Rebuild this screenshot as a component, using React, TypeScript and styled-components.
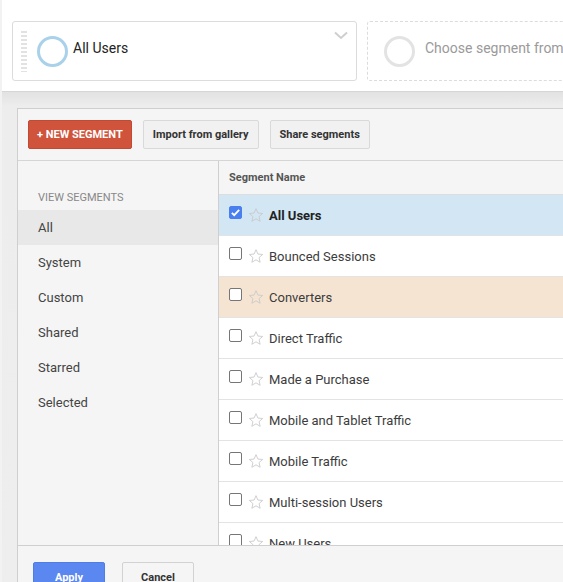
import React from 'react';
import styled, { createGlobalStyle } from 'styled-components';

const GlobalStyle = createGlobalStyle`
  html, body {
    margin: 0;
    padding: 0;
    background: #fff;
  }
  body {
    font-family: Roboto, "Liberation Sans", Arial, sans-serif;
  }
`;

const views = ['All', 'System', 'Custom', 'Shared', 'Starred', 'Selected'];

const segments = [
  { name: 'All Users', checked: true, tone: 'blue' },
  { name: 'Bounced Sessions', checked: false, tone: 'none' },
  { name: 'Converters', checked: false, tone: 'peach' },
  { name: 'Direct Traffic', checked: false, tone: 'none' },
  { name: 'Made a Purchase', checked: false, tone: 'none' },
  { name: 'Mobile and Tablet Traffic', checked: false, tone: 'none' },
  { name: 'Mobile Traffic', checked: false, tone: 'none' },
  { name: 'Multi-session Users', checked: false, tone: 'none' },
  { name: 'New Users', checked: false, tone: 'none' },
  { name: 'Non-bounce Sessions', checked: false, tone: 'none' },
];

const ROW_BG: Record<string, string> = {
  blue: '#d2e6f3',
  peach: '#f6e4d2',
  none: '#fff',
};

const StarIcon = () => (
  <svg width="16" height="16" viewBox="0 0 24 24">
    <path
      d="M12 2.5l2.9 6.6 7.1.6-5.4 4.7 1.6 7-6.2-3.7-6.2 3.7 1.6-7L2 9.7l7.1-.6z"
      fill="none"
      stroke="#c9c9c9"
      strokeWidth="1.3"
      strokeLinejoin="round"
    />
  </svg>
);

const App: React.FC = () => {
  return (
    <Page>
      <GlobalStyle />
      <Header>
        <SegmentCard>
          <Handle />
          <Ring color="#a9d2ea" space={5} />
          <CardLabel>All Users</CardLabel>
          <Chevron width="14" height="9" viewBox="0 0 14 9">
            <path d="M1 1.5l6 5.5 6-5.5" fill="none" stroke="#cfcfcf" strokeWidth="2" />
          </Chevron>
        </SegmentCard>
        <EmptyCard>
          <Ring color="#e3e3e3" space={10} />
          <CardLabel muted>Choose segment from list</CardLabel>
        </EmptyCard>
      </Header>
      <Body>
        <Panel>
          <Toolbar>
            <PrimaryButton>+ NEW SEGMENT</PrimaryButton>
            <GrayButton>Import from gallery</GrayButton>
            <GrayButton>Share segments</GrayButton>
          </Toolbar>
          <Content>
            <Nav>
              <NavTitle>VIEW SEGMENTS</NavTitle>
              {views.map((v, i) => (
                <NavItem key={v} active={i === 0}>
                  {v}
                </NavItem>
              ))}
            </Nav>
            <Table>
              <TableHead>Segment Name</TableHead>
              <Rows>
                {segments.map((s) => (
                  <Row key={s.name} bg={ROW_BG[s.tone]}>
                    <Check checked={s.checked}>
                      {s.checked && (
                        <svg width="11" height="11" viewBox="0 0 12 12">
                          <path d="M2 6.3l2.6 2.6L10 3.2" fill="none" stroke="#fff" strokeWidth="2" />
                        </svg>
                      )}
                    </Check>
                    <StarIcon />
                    <RowName bold={s.checked}>{s.name}</RowName>
                  </Row>
                ))}
              </Rows>
            </Table>
          </Content>
          <Footer>
            <ApplyButton>Apply</ApplyButton>
            <CancelButton>Cancel</CancelButton>
          </Footer>
        </Panel>
      </Body>
    </Page>
  );
};

const Page = styled.div`
  width: 563px;
  height: 582px;
  overflow: hidden;
  display: flex;
  flex-direction: column;
  border-left: 2px solid #f2f2f2;
  box-sizing: border-box;
`;

const Header = styled.div`
  height: 92px;
  flex-shrink: 0;
  box-sizing: border-box;
  background: #fff;
  padding: 21px 0 0 10px;
  display: flex;
  gap: 10px;
  border-bottom: 1px solid #d6d6d6;
`;

const SegmentCard = styled.div`
  position: relative;
  width: 345px;
  height: 60px;
  flex-shrink: 0;
  box-sizing: border-box;
  border: 1px solid #dcdcdc;
  border-radius: 3px;
  display: flex;
  align-items: center;
  padding-left: 8px;
`;

const EmptyCard = styled(SegmentCard)`
  width: 240px;
  border: 1px dashed #dcdcdc;
  padding-left: 16px;
`;

const Handle = styled.div`
  width: 6px;
  height: 41px;
  margin-right: 10px;
  background: repeating-linear-gradient(
    to bottom,
    #e2e2e2 0,
    #e2e2e2 2px,
    transparent 2px,
    transparent 4px
  );
`;

const Ring = styled.div<{ color: string; space: number }>`
  width: 31px;
  height: 31px;
  box-sizing: border-box;
  border-radius: 50%;
  border: 3.5px solid ${(p) => p.color};
  flex-shrink: 0;
  margin-right: ${(p) => p.space}px;
`;

const CardLabel = styled.span<{ muted?: boolean }>`
  font-size: 14px;
  margin-top: -7px;
  color: ${(p) => (p.muted ? '#9a9a9a' : '#222')};
  white-space: nowrap;
`;

const Chevron = styled.svg`
  position: absolute;
  top: 9px;
  right: 8px;
`;

const Body = styled.div`
  flex: 1;
  background: linear-gradient(to bottom, #e2e2e2 0, #ededed 14px, #eeeeee 100%);
  padding: 16px 0 0 15px;
  overflow: hidden;
`;

const Panel = styled.div`
  width: 640px;
  border: 1px solid #cfcfcf;
  background: #f5f5f5;
  display: flex;
  flex-direction: column;
`;

const Toolbar = styled.div`
  height: 52px;
  box-sizing: border-box;
  display: flex;
  align-items: center;
  gap: 11px;
  padding: 0 10px;
  border-bottom: 1px solid #d5d5d5;
`;

const ButtonBase = styled.button`
  height: 29px;
  box-sizing: border-box;
  padding: 0 9px;
  border-radius: 2px;
  white-space: nowrap;
  font-family: Roboto, "Liberation Sans", Arial, sans-serif;
  font-size: 11px;
  font-weight: 700;
  cursor: pointer;
`;

const PrimaryButton = styled(ButtonBase)`
  background: #cf543b;
  border: 1px solid #c04a33;
  color: #fff;
  padding: 0 8px;
`;

const GrayButton = styled(ButtonBase)`
  background: #f1f1f1;
  border: 1px solid #d9d9d9;
  color: #333;
`;

const Content = styled.div`
  display: grid;
  grid-template-columns: 200px 1fr;
  height: 384px;
`;

const Nav = styled.div`
  padding-top: 30px;
  background: #f5f5f5;
`;

const NavTitle = styled.div`
  font-size: 11px;
  color: #888;
  padding: 0 20px;
  margin-bottom: 6px;
`;

const NavItem = styled.div<{ active?: boolean }>`
  height: 35px;
  display: flex;
  align-items: center;
  padding: 0 20px;
  font-size: 13px;
  color: #444;
  background: ${(p) => (p.active ? '#e8e8e8' : 'transparent')};
`;

const Table = styled.div`
  border-left: 1px solid #cfcfcf;
  display: flex;
  flex-direction: column;
  overflow: hidden;
`;

const TableHead = styled.div`
  height: 34px;
  flex-shrink: 0;
  box-sizing: border-box;
  display: flex;
  align-items: center;
  padding-left: 10px;
  font-size: 11px;
  font-weight: 700;
  color: #555;
  background: #f5f5f5;
  border-bottom: 1px solid #dedede;
`;

const Rows = styled.div`
  flex: 1;
  overflow: hidden;
  background: #fff;
`;

const Row = styled.div<{ bg: string }>`
  height: 41px;
  box-sizing: border-box;
  display: flex;
  align-items: center;
  padding-left: 10px;
  gap: 5px;
  background: ${(p) => p.bg};
  border-bottom: 1px solid #e3e3e3;
`;

const Check = styled.span<{ checked: boolean }>`
  width: 13px;
  height: 13px;
  box-sizing: border-box;
  border-radius: 2px;
  margin-top: -6px;
  margin-right: 1px;
  display: flex;
  align-items: center;
  justify-content: center;
  background: ${(p) => (p.checked ? '#4a7ff0' : '#fff')};
  border: 1px solid ${(p) => (p.checked ? '#4a7ff0' : '#767676')};
`;

const RowName = styled.span<{ bold?: boolean }>`
  font-size: 13px;
  color: ${(p) => (p.bold ? '#222' : '#3c3c3c')};
  font-weight: ${(p) => (p.bold ? 700 : 400)};
`;

const Footer = styled.div`
  border-top: 1px solid #cfcfcf;
  padding: 16px 15px;
  display: flex;
  gap: 17px;
`;

const ApplyButton = styled(ButtonBase)`
  width: 72px;
  height: 30px;
  background: #5b87f0;
  border: 1px solid #4f7de8;
  color: #fff;
`;

const CancelButton = styled(ButtonBase)`
  width: 72px;
  height: 30px;
  background: #f5f5f5;
  border: 1px solid #d2d2d2;
  color: #333;
`;

export default App;
